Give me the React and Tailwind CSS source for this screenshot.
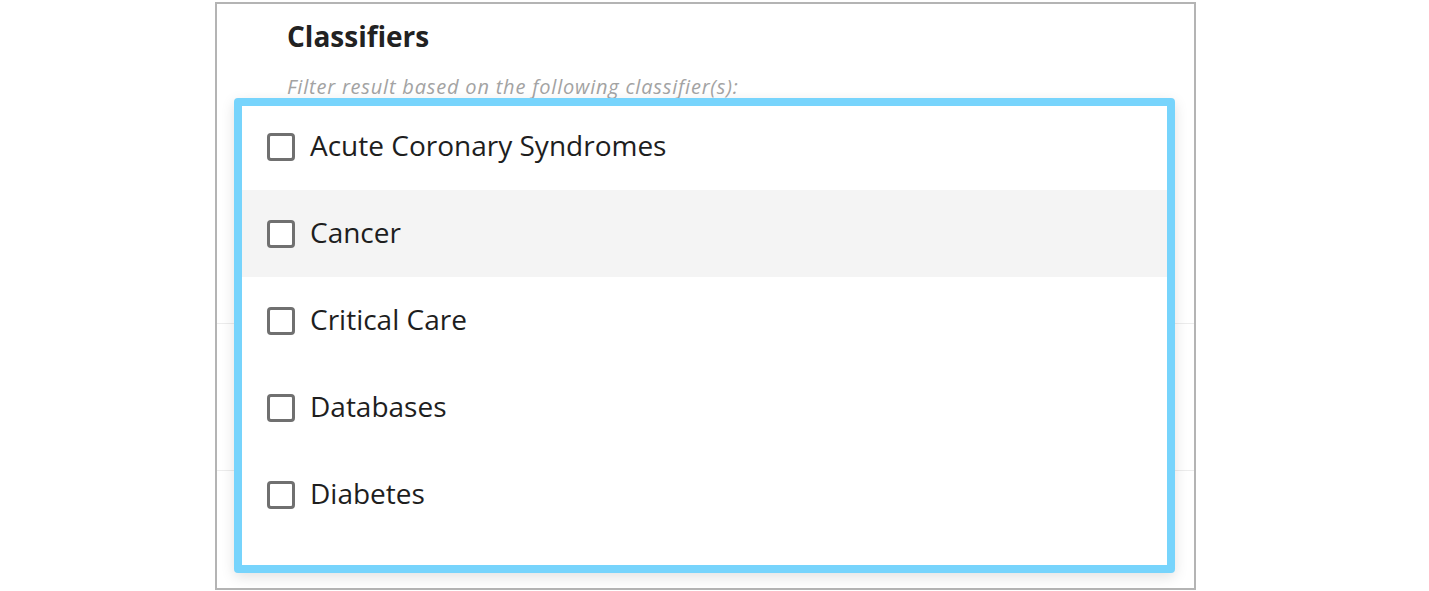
import React from "react";

const items = [
  "Acute Coronary Syndromes",
  "Cancer",
  "Critical Care",
  "Databases",
  "Diabetes",
];

export default function App() {
  return (
    <div
      className="w-[1429px] h-[591px] bg-white overflow-hidden"
      style={{ fontFamily: "'Open Sans', Lato, sans-serif" }}
    >
      <div className="relative ml-[215px] mt-[2px] w-[981px] h-[588px] border-2 border-[#b4b4b4] bg-white">
        <div className="pl-[70px] pt-[14px]">
          <h2 className="text-[28px] leading-[36px] font-bold text-[#222222]">Classifiers</h2>
          <p className="mt-[20px] text-[20px] leading-[26px] tracking-[0.8px] italic text-[#a3a3a3]">
            Filter result based on the following classifier(s):
          </p>
        </div>
        <div className="mt-[223px] border-t border-[#ececec]" />
        <div className="mt-[146px] border-t border-[#ececec]" />

        <div className="absolute left-[17px] top-[94px] w-[941px] h-[475px] border-[8px] border-[#77d4fc] rounded-[4px] bg-white shadow-[0_4px_14px_rgba(0,0,0,0.12)] flex flex-col">
          {items.map((label, i) => (
            <div
              key={label}
              className={
                "flex items-center gap-[15px] pl-[25px] shrink-0 " +
                (i === 0 ? "h-[84px] pb-[3px] " : "h-[87px] ") +
                (i === 1 ? "bg-[#f4f4f4]" : "bg-white")
              }
            >
              <span className="w-[28px] h-[28px] border-[3px] border-[#707070] rounded-[4px] bg-white shrink-0" />
              <span className="mb-[4px] text-[28px] leading-none text-[#1e1e1e]">{label}</span>
            </div>
          ))}
        </div>
      </div>
    </div>
  );
}
